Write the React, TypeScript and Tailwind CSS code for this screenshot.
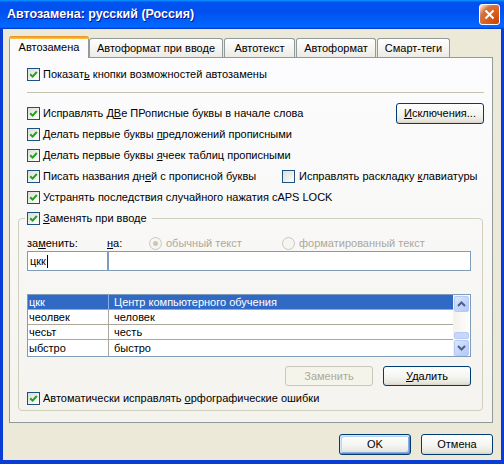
import React from "react";

const font = "font-['Liberation_Sans',Arial,sans-serif]";

function Check({ checked }: { checked?: boolean }) {
  return (
    <span className="w-[13px] h-[13px] shrink-0 border border-[#1C5180] bg-[linear-gradient(135deg,#DCDCD7,#FFFFFF)] flex items-center justify-center">
      {checked && (
        <svg width="9" height="9" viewBox="0 0 9 9">
          <path d="M1.2 4.2 L3.6 6.6 L7.8 2" stroke="#21A121" strokeWidth="2" fill="none" />
        </svg>
      )}
    </span>
  );
}

function Radio({ selected }: { selected?: boolean }) {
  return (
    <span className="w-[13px] h-[13px] shrink-0 rounded-full border border-[#CAC8BB] bg-[#F6F5EF] flex items-center justify-center">
      {selected && <span className="w-[5px] h-[5px] rounded-full bg-[#CAC8BB]" />}
    </span>
  );
}

function Row({ checked, children }: { checked?: boolean; children: React.ReactNode }) {
  return (
    <div className="h-[21px] flex items-center gap-[3px]">
      <Check checked={checked} />
      <span className="whitespace-nowrap">{children}</span>
    </div>
  );
}

function Btn({
  children,
  w,
  disabled,
  focused,
}: {
  children: React.ReactNode;
  w: string;
  disabled?: boolean;
  focused?: boolean;
}) {
  if (disabled) {
    return (
      <div className={`${w} h-[20px] shrink-0 rounded-[3px] border border-[#C9C7BA] bg-[#F5F4EA] text-[#ACA899] flex items-center justify-center`}>
        {children}
      </div>
    );
  }
  return (
    <div
      className={`${w} shrink-0 rounded-[3px] border border-[#003C74] bg-[linear-gradient(to_bottom,#FFFFFF,#F3F3EF_60%,#E6E4DA_90%,#D6D0C5)] flex items-center justify-center ${
        focused
          ? "shadow-[inset_1px_1px_0_#CEE7FF,inset_-1px_-1px_0_#6982EE,inset_2px_2px_0_#BCD4F6,inset_-2px_-2px_0_#89ADE4]"
          : ""
      }`}
    >
      {children}
    </div>
  );
}

function Chevron({ up }: { up?: boolean }) {
  return (
    <svg width="9" height="6" viewBox="0 0 9 6">
      <path d={up ? "M1 5 L4.5 1.5 L8 5" : "M1 1 L4.5 4.5 L8 1"} stroke="#4D6185" strokeWidth="2" fill="none" />
    </svg>
  );
}

function ScrollBtn({ up }: { up?: boolean }) {
  return (
    <div className="w-[15px] h-[16px] rounded-[2px] border border-[#B7CAF5] bg-[linear-gradient(135deg,#DCE6FD,#C1D3FB_60%,#B3C8F5)] flex items-center justify-center">
      <Chevron up={up} />
    </div>
  );
}

const entries = [
  ["цкк", "Центр компьютерного обучения"],
  ["чеолвек", "человек"],
  ["чесьт", "честь"],
  ["ыбстро", "быстро"],
];

export default function App() {
  return (
    <div className={`w-[504px] h-[464px] flex flex-col bg-[#0A3CD6] text-[11px] leading-none text-black ${font}`}>
      {/* Title bar */}
      <div className="h-[29px] shrink-0 flex items-center justify-between bg-[linear-gradient(to_bottom,#0997FF,#0053EE_8%,#0050EE_40%,#0066FF_88%,#0066FF_93%,#005BFF_95%,#003DD7_96%,#003DD7)]">
        <span className="pl-[7px] text-white font-bold text-[12.5px] [text-shadow:1px_1px_#0F1089] whitespace-nowrap">
          Автозамена: русский (Россия)
        </span>
        <div className="w-[21px] h-[21px] mr-[4px] rounded-[3px] border border-white bg-[radial-gradient(circle_at_90%_90%,#CC4600_0%,#DC6527_55%,#CD7546_70%,#FFCCB2_90%,#FFFFFF_100%)] flex items-center justify-center">
          <svg width="11" height="11" viewBox="0 0 11 11">
            <path d="M1.5 1.5 L9.5 9.5 M9.5 1.5 L1.5 9.5" stroke="white" strokeWidth="2" />
          </svg>
        </div>
      </div>

      {/* Body */}
      <div className="flex-1 mx-[3px] mb-[4px] bg-[#ECE9D8] pt-[7px] pl-[6px] pr-[8px]">
        {/* Tabs */}
        <div className="h-[21px] flex items-end">
          <div className="relative z-10 w-[80px] h-[22px] -mb-px rounded-t-[3px] border-x border-[#919B9C] bg-[#FCFCFE] flex flex-col">
            <div className="h-[3px] rounded-t-[3px] bg-[linear-gradient(to_bottom,#E68B2C,#FFC73C)] -mx-px" />
            <div className="flex-1 flex items-center justify-center pb-[2px]">Автозамена</div>
          </div>
          <div className="w-[134px] h-[19px] rounded-t-[3px] border-x border-t border-[#919B9C] bg-[linear-gradient(to_bottom,#FFFFFF,#ECEBE5)] flex items-center justify-center">
            Автоформат при вводе
          </div>
          <div className="ml-[1px] w-[71px] h-[19px] rounded-t-[3px] border-x border-t border-[#919B9C] bg-[linear-gradient(to_bottom,#FFFFFF,#ECEBE5)] flex items-center justify-center">
            Автотекст
          </div>
          <div className="ml-[1px] w-[80px] h-[19px] rounded-t-[3px] border-x border-t border-[#919B9C] bg-[linear-gradient(to_bottom,#FFFFFF,#ECEBE5)] flex items-center justify-center">
            Автоформат
          </div>
          <div className="ml-[1px] w-[73px] h-[19px] rounded-t-[3px] border-x border-t border-[#919B9C] bg-[linear-gradient(to_bottom,#FFFFFF,#ECEBE5)] flex items-center justify-center">
            Смарт-теги
          </div>
        </div>

        {/* Panel */}
        <div className="border border-[#919B9C] bg-[linear-gradient(to_bottom,#FCFCFE,#F4F3EE)] pl-[8px] pr-[8px] pt-[6px] pb-[11px]">
          <div className="ml-[9px]">
            <Row checked>
              Показат<u>ь</u> кнопки возможностей автозамены
            </Row>
            <div className="mt-[7px] h-px bg-[#C5C2B2]" />
            <div className="mt-[10px] flex items-center justify-between">
              <Row checked>
                Исправлять Д<u>В</u>е ПРописные буквы в начале слова
              </Row>
              <Btn w="w-[88px] h-[21px]">
                <span>
                  <u>И</u>сключения...
                </span>
              </Btn>
            </div>
            <Row checked>
              Делать первые буквы <u>п</u>редложений прописными
            </Row>
            <Row checked>
              Делать первые буквы <u>я</u>чеек таблиц прописными
            </Row>
            <div className="flex">
              <div className="w-[255px]">
                <Row checked>
                  Писать названия дн<u>е</u>й с прописной буквы
                </Row>
              </div>
              <div className="h-[21px] flex items-center gap-[4px]">
                <Check />
                <span className="whitespace-nowrap">
                  Исправлять раскладку <u>к</u>лавиатуры
                </span>
              </div>
            </div>
            <Row checked>
              Устранять после<u>д</u>ствия случайного нажатия cAPS LOCK
            </Row>
          </div>

          {/* Group */}
          <fieldset className="mt-[2px] mr-[1px] border border-[#D0D0BF] rounded-[4px] pl-[6px] pb-[4px]">
            <legend className="px-[2px]">
              <span className="h-[16px] flex items-center gap-[3px] pr-[3px]">
                <Check checked />
                <span className="whitespace-nowrap">
                  <u>З</u>аменять при вводе
                </span>
              </span>
            </legend>
            <div className="ml-[2px]">
              <div className="mt-[9px] h-[16px] flex items-center">
                <span className="w-[80px]">
                  за<u>м</u>енить:
                </span>
                <span className="w-[42px]">
                  <u>н</u>а:
                </span>
                <span className="w-[133px] flex items-center gap-[4px] text-[#ACA899]">
                  <Radio selected />
                  обычный текст
                </span>
                <span className="flex items-center gap-[4px] text-[#ACA899]">
                  <Radio />
                  форматированный текст
                </span>
              </div>
              <div className="h-[20px] flex">
                <div className="w-[81px] h-full border border-[#7F9DB9] bg-white flex items-center pl-[2px]">
                  цкк<span className="ml-px w-px h-[13px] bg-black" />
                </div>
                <div className="w-[363px] h-full border border-[#7F9DB9] bg-white" />
              </div>

              {/* List */}
              <div className="mt-[23px] w-[444px] h-[63px] border border-[#7F9DB9] bg-white flex">
                <div className="flex-1 flex flex-col">
                  {entries.map(([a, b], i) => (
                    <div
                      key={a}
                      className={`flex ${i < 3 ? "h-[15px] border-b border-[#ACA899]" : "h-[16px]"} ${
                        i === 0 ? "bg-[#316AC5] text-white" : ""
                      }`}
                    >
                      <div
                        className={`w-[81px] border-r flex items-center pl-[1px] ${
                          i === 0 ? "border-[#8CAEE4]" : "border-[#ACA899]"
                        }`}
                      >
                        {a}
                      </div>
                      <div className="flex-1 flex items-center pl-[5px]">{b}</div>
                    </div>
                  ))}
                </div>
                <div className="w-[17px] flex flex-col items-center pt-[1px] pb-[0px] bg-[linear-gradient(to_right,#F3F1EC,#FEFEFB)]">
                  <ScrollBtn up />
                  <div className="flex-1" />
                  <div className="w-[15px] h-[7px] rounded-[2px] border border-[#B7CAF5] bg-[#C8D6FB] mb-[1px]" />
                  <ScrollBtn />
                </div>
              </div>

              <div className="mt-[9px] w-[444px] flex justify-end gap-[10px]">
                <Btn w="w-[88px]" disabled>
                  Заменить
                </Btn>
                <Btn w="w-[88px] h-[20px]">
                  <span>
                    <u>У</u>далить
                  </span>
                </Btn>
              </div>

              <div className="mt-[5px] h-[15px] flex items-center gap-[3px]">
                <Check checked />
                <span className="whitespace-nowrap">
                  Автоматически исправлять <u>о</u>рфографические ошибки
                </span>
              </div>
            </div>
          </fieldset>
        </div>

        {/* Bottom buttons */}
        <div className="mt-[11px] flex justify-end gap-[10px]">
          <Btn w="w-[72px] h-[21px]" focused>
            OK
          </Btn>
          <Btn w="w-[72px] h-[21px]">Отмена</Btn>
        </div>
      </div>
    </div>
  );
}
